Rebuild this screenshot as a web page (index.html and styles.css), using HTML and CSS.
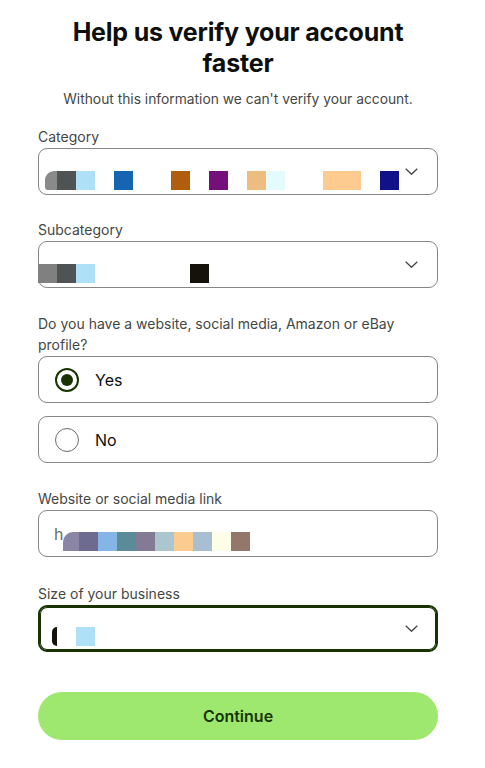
FILE: index.html
```html
<!DOCTYPE html>
<html lang="en">
<head>
<meta charset="utf-8">
<title>Help us verify your account faster</title>
<link rel="stylesheet" href="styles.css">
</head>
<body>
<main class="page">
  <h1 class="title">Help us verify your account faster</h1>
  <p class="subtitle">Without this information we can't verify your account.</p>

  <div class="field first-field">
    <label class="label">Category</label>
    <div class="select">
      <div class="value">
        <span class="px c-gr part"></span><span class="px c-dg"></span><span class="px c-lb"></span><span class="px"></span><span class="px c-bl"></span><span class="px"></span><span class="px"></span><span class="px c-br"></span><span class="px"></span><span class="px c-pu"></span><span class="px"></span><span class="px c-sa"></span><span class="px c-ic"></span><span class="px"></span><span class="px"></span><span class="px c-pe"></span><span class="px c-pe"></span><span class="px"></span><span class="px c-nv"></span>
      </div>
      <svg class="chev" width="13" height="7" viewBox="0 0 13 7"><path d="M0.7 0.7l5.8 5.6 5.8-5.6" fill="none" stroke="#454745" stroke-width="1.3"/></svg>
    </div>
  </div>

  <div class="field">
    <label class="label">Subcategory</label>
    <div class="select">
      <div class="value wide">
        <span class="px c-mg"></span><span class="px c-dg"></span><span class="px c-lb"></span><span class="px"></span><span class="px"></span><span class="px"></span><span class="px"></span><span class="px"></span><span class="px c-bk"></span>
      </div>
      <svg class="chev" width="13" height="7" viewBox="0 0 13 7"><path d="M0.7 0.7l5.8 5.6 5.8-5.6" fill="none" stroke="#454745" stroke-width="1.3"/></svg>
    </div>
  </div>

  <div class="field">
    <p class="label question">Do you have a website, social media, Amazon or eBay profile?</p>
    <div class="options">
      <label class="option">
        <span class="radio checked"></span>
        <span class="option-text">Yes</span>
      </label>
      <label class="option">
        <span class="radio"></span>
        <span class="option-text">No</span>
      </label>
    </div>
  </div>

  <div class="field link-field">
    <label class="label">Website or social media link</label>
    <div class="input">
      <span class="typed">h</span>
      <div class="value link">
        <span class="px c-l1 first"></span><span class="px c-l2"></span><span class="px c-l3"></span><span class="px c-l4"></span><span class="px c-l5"></span><span class="px c-l6"></span><span class="px c-l7"></span><span class="px c-l8"></span><span class="px c-l9"></span><span class="px c-l10"></span>
      </div>
    </div>
  </div>

  <div class="field size-field">
    <label class="label">Size of your business</label>
    <div class="select focused">
      <div class="value">
        <span class="px c-bk sliver"></span><span class="px"></span><span class="px c-lb"></span>
      </div>
      <svg class="chev" width="13" height="7" viewBox="0 0 13 7"><path d="M0.7 0.7l5.8 5.6 5.8-5.6" fill="none" stroke="#454745" stroke-width="1.3"/></svg>
    </div>
  </div>

  <button class="continue" type="button">Continue</button>
</main>
</body>
</html>
```

FILE: styles.css
```css
* { box-sizing: border-box; }
html, body { margin: 0; padding: 0; background: #fff; }
body {
  font-family: Inter, "Noto Sans", Arial, sans-serif;
  color: #0e0f0c;
}
.page {
  width: 400px;
  margin-left: 38px;
  padding-top: 17px;
  display: flex;
  flex-direction: column;
}
.title {
  margin: 0;
  font-size: 25px;
  line-height: 31px;
  font-weight: 700;
  text-align: center;
  letter-spacing: -0.2px;
}
.subtitle {
  margin: 10px 0 0;
  font-size: 13.8px;
  line-height: 20px;
  text-align: center;
  color: #454745;
}
.field {
  margin-top: 25px;
  display: flex;
  flex-direction: column;
}
.first-field { margin-top: 18px; }
.link-field { margin-top: 26px; }
.size-field { margin-top: 27px; }
.label {
  display: block;
  margin: 0 0 1px;
  font-size: 14px;
  line-height: 20px;
  color: #454745;
}
.question { line-height: 21px; }
.select, .input {
  height: 47px;
  border: 1px solid #868685;
  border-radius: 9px;
  display: flex;
  align-items: center;
  padding: 0 19px 0 6px;
}
.select.focused {
  border: 2px solid #163300;
  box-shadow: inset 0 0 0 1px #163300;
  padding-left: 5px;
  padding-right: 18px;
}
.value {
  display: flex;
  align-self: flex-end;
  margin-bottom: 4px;
}
.value.wide { margin-left: -7px; }
.px {
  width: 19px;
  height: 19px;
  flex: none;
}
.part { width: 12px; border-top-left-radius: 9px; border-bottom-left-radius: 3px; }
.sliver { width: 5px; margin-left: 7px; border-top-left-radius: 5px; border-bottom-left-radius: 5px; }
.c-gr { background: #8a8a8a; }
.c-mg { background: #808080; }
.c-dg { background: #4f5354; }
.c-lb { background: #aee0f7; }
.c-bl { background: #1565b0; }
.c-br { background: #b05e0e; }
.c-pu { background: #74107a; }
.c-sa { background: #ecbd7e; }
.c-ic { background: #e3fbfd; }
.c-pe { background: #fdcb8f; }
.c-nv { background: #11118a; }
.c-bk { background: #14120a; }
.c-l1 { background: #8a84a5; }
.c-l2 { background: #6d6b8f; }
.c-l3 { background: #85b5e5; }
.c-l4 { background: #5b8a99; }
.c-l5 { background: #837a96; }
.c-l6 { background: #abc6cf; }
.c-l7 { background: #fccb90; }
.c-l8 { background: #a8bfd1; }
.c-l9 { background: #fefde7; }
.c-l10 { background: #93776b; }
.first { border-top-left-radius: 10px; width: 16px; }
.chev { margin-left: auto; flex: none; }
.input { padding-left: 15px; }
.typed {
  font-size: 16px;
  color: #6a6c6a;
  align-self: center;
}
.link { margin-left: 0; margin-bottom: 5px; }
.options {
  display: flex;
  flex-direction: column;
  gap: 13px;
}
.option {
  height: 47px;
  border: 1px solid #868685;
  border-radius: 9px;
  display: flex;
  align-items: center;
  padding-left: 16px;
}
.radio {
  width: 24px;
  height: 24px;
  border: 1px solid #6a6c6a;
  border-radius: 50%;
  flex: none;
  display: flex;
  align-items: center;
  justify-content: center;
}
.radio.checked { border: 2px solid #163300; }
.radio.checked::after {
  content: "";
  width: 12px;
  height: 12px;
  border-radius: 50%;
  background: #163300;
}
.option-text {
  margin-left: 16px;
  font-size: 16px;
  color: #0e0f0c;
}
.continue {
  margin-top: 40px;
  height: 48px;
  border: 0;
  border-radius: 24px;
  background: #9fe870;
  color: #163300;
  font-family: Inter, "Noto Sans", Arial, sans-serif;
  font-size: 16px;
  font-weight: 600;
}
```
